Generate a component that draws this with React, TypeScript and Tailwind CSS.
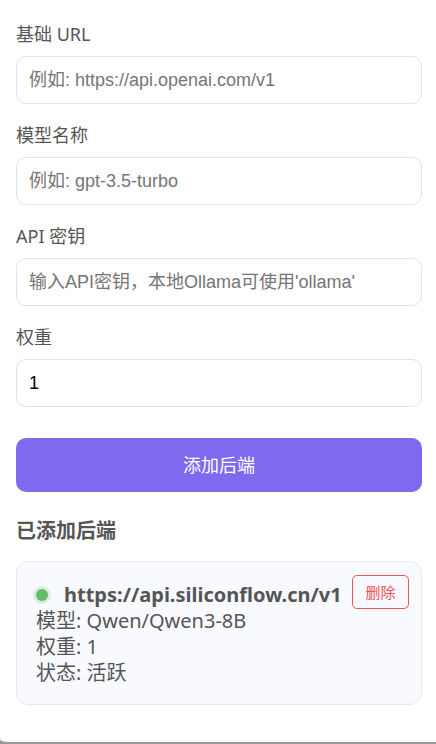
import { useState } from "react";

type Field = {
  id: string;
  label: string;
  placeholder?: string;
  type: string;
  initial: string;
};

const fields: Field[] = [
  { id: "base-url", label: "基础 URL", placeholder: "例如: https://api.openai.com/v1", type: "text", initial: "" },
  { id: "model", label: "模型名称", placeholder: "例如: gpt-3.5-turbo", type: "text", initial: "" },
  { id: "api-key", label: "API 密钥", placeholder: "输入API密钥，本地Ollama可使用'ollama'", type: "password", initial: "" },
  { id: "weight", label: "权重", type: "text", initial: "1" },
];

function FormField({ field }: { field: Field }) {
  const [value, setValue] = useState(field.initial);
  return (
    <div className="flex flex-col gap-2.5">
      <label htmlFor={field.id} className="text-[18px] leading-6">
        {field.label}
      </label>
      <input
        id={field.id}
        type={field.type}
        value={value}
        placeholder={field.placeholder}
        onChange={(e) => setValue(e.target.value)}
        className="h-12 w-full rounded-[10px] border border-[#e1e1ea] bg-white px-3 font-['Liberation_Sans','Noto_Sans_CJK_SC',sans-serif] text-[18px] text-black outline-none placeholder:text-[#757575]"
      />
    </div>
  );
}

function BackendCard() {
  return (
    <article className="relative rounded-xl border border-[#e8e8f2] bg-[#f9faff] px-[19px] pt-5 pb-[18px] text-[20px] leading-[26px]">
      <div className="flex items-center">
        <span className="mr-4 size-3 shrink-0 rounded-full bg-[#66bb6a] ring-3 ring-[#66bb6a]/20" />
        <strong className="font-bold whitespace-nowrap">https://api.siliconflow.cn/v1</strong>
      </div>
      <p>模型: Qwen/Qwen3-8B</p>
      <p>权重: 1</p>
      <p>状态: 活跃</p>
      <button
        type="button"
        className="absolute top-[13px] right-3 h-[34px] w-[57px] rounded-[5px] border border-[#ef5350] text-[15px] leading-5 text-[#ef5350]"
      >
        删除
      </button>
    </article>
  );
}

export default function App() {
  return (
    <div className="min-h-screen bg-[#999999] font-['Noto_Sans','Noto_Sans_CJK_SC',sans-serif] text-[#555555]">
      <main className="rounded-bl-[8px_3px] bg-white pt-[22px] pr-3.5 pb-[37px] pl-4">
        <form onSubmit={(e) => e.preventDefault()}>
          <div className="flex flex-col gap-[19px]">
            {fields.map((field) => (
              <FormField key={field.id} field={field} />
            ))}
          </div>
          <button
            type="submit"
            className="mt-[31px] h-[54px] w-full rounded-[10px] bg-[#7e69ef] text-[18px] text-white"
          >
            添加后端
          </button>
        </form>
        <h2 className="mt-[25px] mb-4 text-[20px] leading-7 font-bold">已添加后端</h2>
        <BackendCard />
      </main>
    </div>
  );
}
